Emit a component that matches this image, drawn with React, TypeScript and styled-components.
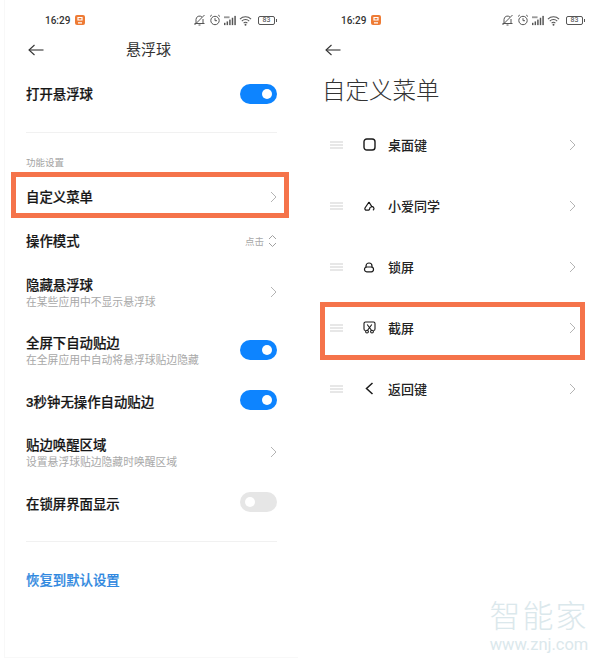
import React from 'react';
import styled, { createGlobalStyle } from 'styled-components';

const GlobalStyle = createGlobalStyle`
  html, body {
    margin: 0;
    padding: 0;
    background: #fff;
  }
  body {
    font-family: Roboto, "Noto Sans CJK SC", sans-serif;
    color: #1a1a1a;
  }
`;

const Page = styled.div`
  position: relative;
  display: flex;
  width: 600px;
  height: 662px;
  overflow: hidden;
  background: #fff;
`;

const LeftPanel = styled.div`
  width: 294px;
  height: 658px;
  margin-left: 4px;
  padding: 0 21px 0 21px;
  box-sizing: border-box;
  border-left: 1px solid #f8f8f8;
  border-bottom: 1px solid #f8f8f8;
`;

const RightPanel = styled.div`
  width: 300px;
  height: 662px;
  margin-left: 2px;
  padding: 0 15px 0 22px;
  box-sizing: border-box;
`;

/* status bar */
const StatusBar = styled.div`
  display: flex;
  align-items: center;
  height: 40px;
  padding: 0 0 0 19px;
`;

const Time = styled.span`
  font-size: 10px;
  font-weight: 500;
  color: #333;
`;

const Badge = styled.span`
  display: flex;
  align-items: center;
  justify-content: center;
  width: 10px;
  height: 10px;
  margin-left: 5px;
  border-radius: 2px;
  background: #ee7b35;
  color: #fff;
`;

const StatusIcons = styled.div`
  display: flex;
  align-items: center;
  gap: 3px;
  margin-left: auto;
  color: #555;
`;

const Battery = styled.span`
  position: relative;
  display: flex;
  align-items: center;
  justify-content: center;
  width: 15px;
  height: 7px;
  margin: 0 2px 0 3px;
  border: 1px solid #555;
  border-radius: 2px;
  font-size: 7px;
  line-height: 7px;
  color: #444;

  &::after {
    content: '';
    position: absolute;
    right: -3px;
    top: 2px;
    width: 1px;
    height: 3px;
    background: #555;
  }
`;

/* headers */
const TopBar = styled.div`
  position: relative;
  display: flex;
  align-items: center;
  justify-content: center;
  height: 18px;
  padding-right: 6px;
`;

const BackSlot = styled.span`
  position: absolute;
  left: 2px;
  top: 4px;
  display: flex;
`;

const BackBar = styled.div`
  display: flex;
  align-items: center;
  height: 20px;
  padding-left: 3px;
`;

const TopTitle = styled.span`
  padding-bottom: 2px;
  font-size: 15px;
  color: #333;
`;

const PageTitle = styled.h1`
  margin: 11px 0 3px;
  font-size: 23.5px;
  font-weight: 300;
  line-height: 40px;
  color: #333;
`;

/* left list */
const Row = styled.div<{ $h: number; $top?: number }>`
  position: relative;
  display: flex;
  align-items: center;
  justify-content: space-between;
  height: ${p => p.$h}px;
  margin-top: ${p => p.$top || 0}px;
`;

const Texts = styled.div`
  display: flex;
  flex-direction: column;
  margin-top: 4px;
`;

const Title = styled.span`
  font-size: 13.4px;
  font-weight: 500;
  line-height: 17px;
  color: #161616;
  -webkit-text-stroke: 0.2px #161616;
`;

const Sub = styled.span`
  font-size: 10.8px;
  line-height: 17px;
  color: #a8a8a8;
`;

const Divider = styled.div<{ $top: number }>`
  height: 1px;
  margin-top: ${p => p.$top}px;
  background: #f1f1f1;
`;

const Section = styled.div`
  height: 14px;
  margin: 23px 0 5px;
  font-size: 9.5px;
  line-height: 14px;
  color: #a3a3a3;
`;

const Track = styled.span<{ $on: boolean }>`
  display: flex;
  align-items: center;
  justify-content: ${p => (p.$on ? 'flex-end' : 'flex-start')};
  width: 37px;
  height: 20px;
  padding: 0 5px;
  box-sizing: border-box;
  border-radius: 10px;
  background: ${p => (p.$on ? '#0d84ff' : '#e6e6e6')};
`;

const Knob = styled.span`
  width: 10px;
  height: 10px;
  border-radius: 50%;
  background: #fff;
`;

const Value = styled.span`
  display: flex;
  align-items: center;
  gap: 4px;
  font-size: 9.5px;
  color: #a8a8a8;
`;

const ResetLink = styled.div`
  height: 40px;
  margin-top: 19px;
  font-size: 13.4px;
  font-weight: 500;
  line-height: 40px;
  color: #2f88e0;
  -webkit-text-stroke: 0.2px #2f88e0;
`;

const Highlight = styled.span<{ $top: number; $bottom: number; $left: number; $right: number }>`
  position: absolute;
  top: ${p => p.$top}px;
  bottom: ${p => p.$bottom}px;
  left: ${p => p.$left}px;
  right: ${p => p.$right}px;
  border: 5px solid #f5734a;
  pointer-events: none;
`;

/* right list */
const MenuRow = styled.div`
  position: relative;
  display: flex;
  align-items: center;
  height: 61px;
  padding: 0 0 0 8px;
`;

const IconSlot = styled.span`
  display: flex;
  justify-content: center;
  width: 14px;
  margin-left: 19px;
  color: #1a1a1a;
`;

const MenuLabel = styled.span`
  flex: 1;
  margin-left: 12px;
  font-size: 13px;
  font-weight: 500;
  color: #222;
`;

const ChevronSlot = styled.span`
  display: flex;
  margin-right: 9px;
`;

const Watermark = styled.div`
  position: absolute;
  left: 487px;
  top: 598px;
  width: 104px;
  text-align: center;
  color: #dbe8ec;
`;

const MarkName = styled.div`
  font-family: "Liberation Sans", "Noto Sans CJK SC", sans-serif;
  font-size: 31px;
  font-weight: 300;
  line-height: 38px;
  letter-spacing: 2px;
`;

const MarkUrl = styled.div`
  margin-top: 3px;
  font-size: 16.5px;
  line-height: 12px;
  white-space: nowrap;
`;

const Chevron = () => (
  <svg width="7" height="12" viewBox="0 0 7 12" fill="none" stroke="#b4b4b4" strokeWidth="1">
    <polyline points="1,1 6,6 1,11" />
  </svg>
);

const UpDown = () => (
  <svg width="9" height="14" viewBox="0 0 9 14" fill="none" stroke="#a0a0a0" strokeWidth="1">
    <polyline points="1,5 4.5,1.5 8,5" />
    <polyline points="1,9 4.5,12.5 8,9" />
  </svg>
);

const BackArrow = () => (
  <svg width="16" height="12" viewBox="0 0 16 12" fill="none" stroke="#333" strokeWidth="1.1">
    <polyline points="6.5,1 1,6 6.5,11" />
    <line x1="1" y1="6" x2="15.5" y2="6" />
  </svg>
);

const Handle = () => (
  <svg width="13" height="8" viewBox="0 0 13 8" stroke="#cfcfcf" strokeWidth="1">
    <line x1="0" y1="1" x2="13" y2="1" />
    <line x1="0" y1="4" x2="13" y2="4" />
    <line x1="0" y1="7" x2="13" y2="7" />
  </svg>
);

const StatusRight = () => (
  <StatusIcons>
    <svg width="13" height="12" viewBox="0 0 13 12" fill="none" stroke="currentColor" strokeWidth="1">
      <path d="M3 9V5.5a3.5 3.5 0 0 1 6-2.4M10 5v4M1.5 9.5h10M5.5 11h2M1.5 11L11.5 1" />
    </svg>
    <svg width="12" height="12" viewBox="0 0 12 12" fill="none" stroke="currentColor" strokeWidth="1">
      <circle cx="6" cy="6.5" r="4.2" />
      <path d="M6 4.2v2.5h2M1 2.5L2.8 1M11 2.5L9.2 1" />
    </svg>
    <svg width="12" height="11" viewBox="0 0 13 11" fill="currentColor">
      <rect x="0" y="8" width="1.6" height="2.5" />
      <rect x="2.8" y="6.5" width="1.6" height="4" />
      <rect x="5.6" y="4.5" width="1.6" height="6" />
      <rect x="8.4" y="2.5" width="1.6" height="8" />
      <rect x="11.2" y="0.5" width="1.6" height="10" />
      <rect x="0" y="1" width="6" height="2" opacity="0.6" />
    </svg>
    <svg width="13" height="11" viewBox="0 0 14 11" fill="none" stroke="currentColor" strokeWidth="1.1">
      <path d="M1 4a8.5 8.5 0 0 1 12 0M3 6.2a5.6 5.6 0 0 1 8 0M5 8.3a2.8 2.8 0 0 1 4 0" />
      <circle cx="7" cy="10" r="0.5" />
    </svg>
    <Battery>83</Battery>
  </StatusIcons>
);

const Status = () => (
  <StatusBar>
    <Time>16:29</Time>
    <Badge>
      <svg width="6" height="8" viewBox="0 0 6 8" fill="none" stroke="#fff" strokeWidth="1.2">
        <path d="M1 1.5h4v2.5H1zM1 6.8h4" />
      </svg>
    </Badge>
    <StatusRight />
  </StatusBar>
);

const Toggle = ({ on }: { on: boolean }) => (
  <Track $on={on}>
    <Knob />
  </Track>
);

const HomeIcon = (
  <svg width="13" height="13" viewBox="0 0 13 13" fill="none" stroke="currentColor" strokeWidth="1.4">
    <rect x="1" y="1" width="11" height="11" rx="2.8" />
  </svg>
);

const XiaoaiIcon = (
  <svg width="12" height="12" viewBox="0 0 12 12" fill="none" stroke="currentColor" strokeWidth="1.2">
    <path d="M6 2L2 8a1.6 1.6 0 0 0 1.6 2.2H5a1.7 1.7 0 0 0 1.7-1.7A1.6 1.6 0 0 1 8.3 7a1.6 1.6 0 0 1 1.6 3.2M6 2l2.8 4.6" />
  </svg>
);

const LockIcon = (
  <svg width="12" height="12" viewBox="0 0 12 12" fill="none" stroke="currentColor" strokeWidth="1.2">
    <path d="M3 6.5V5a3 3 0 0 1 6 0v1.5" />
    <rect x="1.5" y="6" width="9" height="4.8" rx="2.2" />
  </svg>
);

const ShotIcon = (
  <svg width="13" height="13" viewBox="0 0 13 13" fill="none" stroke="currentColor" strokeWidth="1.1">
    <path d="M2.5 9.5A1.5 1.5 0 0 1 1 8V2.5A1.5 1.5 0 0 1 2.5 1h8A1.5 1.5 0 0 1 12 2.5V8a1.5 1.5 0 0 1-1.5 1.5" />
    <path d="M4.2 3.5l4.4 6M8.8 3.5l-4.4 6" />
    <circle cx="4" cy="10.6" r="1.4" />
    <circle cx="9" cy="10.6" r="1.4" />
  </svg>
);

const ReturnIcon = (
  <svg width="9" height="13" viewBox="0 0 9 13" fill="none" stroke="currentColor" strokeWidth="1.5">
    <polyline points="7.5,1 1.5,6.5 7.5,12" />
  </svg>
);

const menuItems = [
  { label: '桌面键', icon: HomeIcon },
  { label: '小爱同学', icon: XiaoaiIcon },
  { label: '锁屏', icon: LockIcon },
  { label: '截屏', icon: ShotIcon, marked: true },
  { label: '返回键', icon: ReturnIcon },
];

const App = () => {
  return (
    <Page>
      <GlobalStyle />
      <LeftPanel>
        <Status />
        <TopBar>
          <BackSlot><BackArrow /></BackSlot>
          <TopTitle>悬浮球</TopTitle>
        </TopBar>
        <Row $h={44} $top={14}>
          <Title>打开悬浮球</Title>
          <Toggle on />
        </Row>
        <Divider $top={16} />
        <Section>功能设置</Section>
        <Row $h={44}>
          <Title>自定义菜单</Title>
          <Chevron />
          <Highlight $top={-3} $bottom={1} $left={-15} $right={-12} />
        </Row>
        <Row $h={44}>
          <Title>操作模式</Title>
          <Value>点击 <UpDown /></Value>
        </Row>
        <Row $h={58}>
          <Texts>
            <Title>隐藏悬浮球</Title>
            <Sub>在某些应用中不显示悬浮球</Sub>
          </Texts>
          <Chevron />
        </Row>
        <Row $h={58}>
          <Texts>
            <Title>全屏下自动贴边</Title>
            <Sub>在全屏应用中自动将悬浮球贴边隐藏</Sub>
          </Texts>
          <Toggle on />
        </Row>
        <Row $h={42}>
          <Texts>
            <Title>3秒钟无操作自动贴边</Title>
          </Texts>
          <Toggle on />
        </Row>
        <Row $h={61}>
          <Texts>
            <Title>贴边唤醒区域</Title>
            <Sub>设置悬浮球贴边隐藏时唤醒区域</Sub>
          </Texts>
          <Chevron />
        </Row>
        <Row $h={40}>
          <Texts>
            <Title>在锁屏界面显示</Title>
          </Texts>
          <Toggle on={false} />
        </Row>
        <Divider $top={19} />
        <ResetLink>恢复到默认设置</ResetLink>
      </LeftPanel>

      <RightPanel>
        <Status />
        <BackBar><BackArrow /></BackBar>
        <PageTitle>自定义菜单</PageTitle>
        {menuItems.map(item => (
          <MenuRow key={item.label}>
            <Handle />
            <IconSlot>{item.icon}</IconSlot>
            <MenuLabel>{item.label}</MenuLabel>
            <ChevronSlot><Chevron /></ChevronSlot>
            {item.marked && <Highlight $top={5} $bottom={-2} $left={-2} $right={0} />}
          </MenuRow>
        ))}
      </RightPanel>

      <Watermark>
        <MarkName>智能家</MarkName>
        <MarkUrl>www.znj.com</MarkUrl>
      </Watermark>
    </Page>
  );
};

export default App;
